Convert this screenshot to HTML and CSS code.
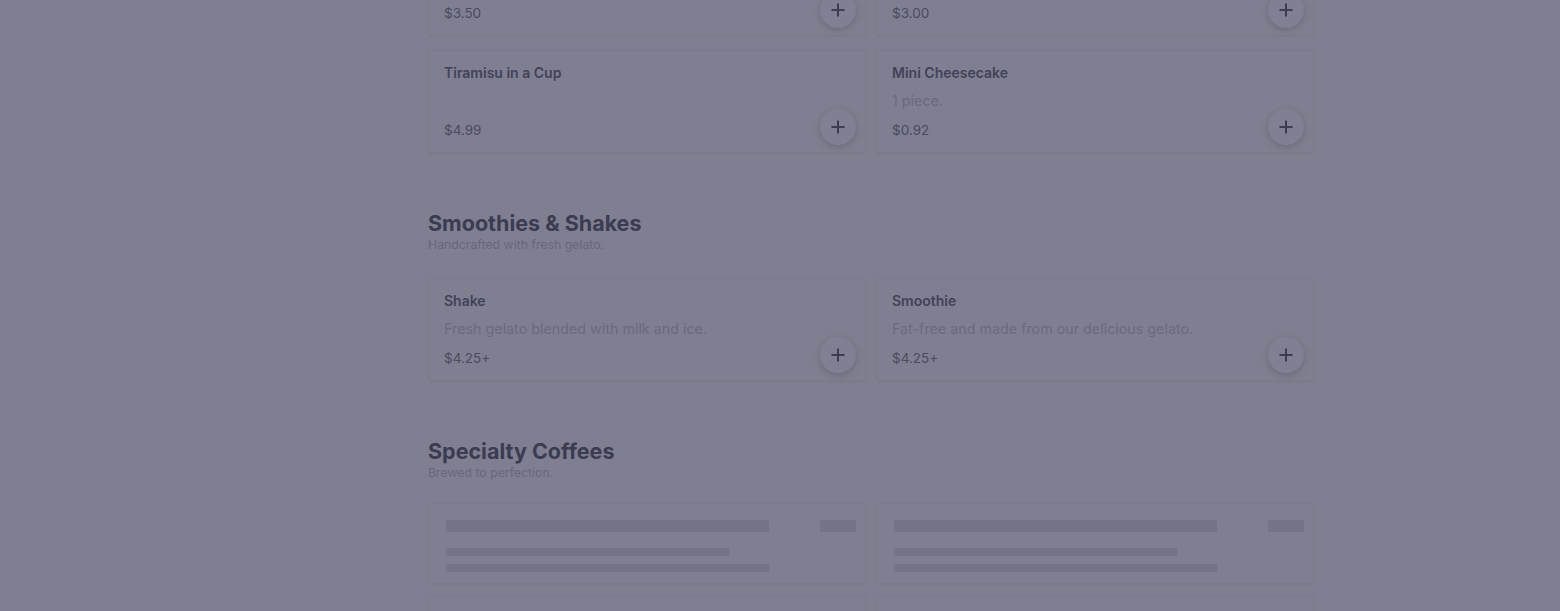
FILE: index.html
```html
<!DOCTYPE html>
<html lang="en">
<head>
<meta charset="utf-8">
<title>Menu</title>
<link rel="stylesheet" href="styles.css">
</head>
<body>
<div class="page">
  <main class="menu">
    <section class="section section--first">
      <div class="grid">
        <article class="card">
          <h3 class="card__title"></h3>
          <p class="card__desc"></p>
          <p class="card__price">$3.50</p>
          <button class="add" aria-label="Add"><svg viewBox="0 0 14 14" width="14" height="14"><path d="M7 0.5v13M0.5 7h13" /></svg></button>
        </article>
        <article class="card">
          <h3 class="card__title"></h3>
          <p class="card__desc"></p>
          <p class="card__price">$3.00</p>
          <button class="add" aria-label="Add"><svg viewBox="0 0 14 14" width="14" height="14"><path d="M7 0.5v13M0.5 7h13" /></svg></button>
        </article>
        <article class="card">
          <h3 class="card__title">Tiramisu in a Cup</h3>
          <p class="card__desc"></p>
          <p class="card__price">$4.99</p>
          <button class="add" aria-label="Add"><svg viewBox="0 0 14 14" width="14" height="14"><path d="M7 0.5v13M0.5 7h13" /></svg></button>
        </article>
        <article class="card">
          <h3 class="card__title">Mini Cheesecake</h3>
          <p class="card__desc">1 piece.</p>
          <p class="card__price">$0.92</p>
          <button class="add" aria-label="Add"><svg viewBox="0 0 14 14" width="14" height="14"><path d="M7 0.5v13M0.5 7h13" /></svg></button>
        </article>
      </div>
    </section>

    <section class="section">
      <h2 class="section__title">Smoothies &amp; Shakes</h2>
      <p class="section__sub">Handcrafted with fresh gelato.</p>
      <div class="grid">
        <article class="card">
          <h3 class="card__title">Shake</h3>
          <p class="card__desc">Fresh gelato blended with milk and ice.</p>
          <p class="card__price">$4.25+</p>
          <button class="add" aria-label="Add"><svg viewBox="0 0 14 14" width="14" height="14"><path d="M7 0.5v13M0.5 7h13" /></svg></button>
        </article>
        <article class="card">
          <h3 class="card__title">Smoothie</h3>
          <p class="card__desc">Fat-free and made from our delicious gelato.</p>
          <p class="card__price">$4.25+</p>
          <button class="add" aria-label="Add"><svg viewBox="0 0 14 14" width="14" height="14"><path d="M7 0.5v13M0.5 7h13" /></svg></button>
        </article>
      </div>
    </section>

    <section class="section">
      <h2 class="section__title">Specialty Coffees</h2>
      <p class="section__sub">Brewed to perfection.</p>
      <div class="grid grid--loading">
        <div class="skeleton">
          <div class="skeleton__row"><span class="bar bar--title"></span><span class="bar bar--price"></span></div>
          <span class="bar bar--line bar--short"></span>
          <span class="bar bar--line"></span>
        </div>
        <div class="skeleton">
          <div class="skeleton__row"><span class="bar bar--title"></span><span class="bar bar--price"></span></div>
          <span class="bar bar--line bar--short"></span>
          <span class="bar bar--line"></span>
        </div>
        <div class="skeleton">
          <div class="skeleton__row"><span class="bar bar--title"></span><span class="bar bar--price"></span></div>
          <span class="bar bar--line bar--short"></span>
          <span class="bar bar--line"></span>
        </div>
        <div class="skeleton">
          <div class="skeleton__row"><span class="bar bar--title"></span><span class="bar bar--price"></span></div>
          <span class="bar bar--line bar--short"></span>
          <span class="bar bar--line"></span>
        </div>
      </div>
    </section>
  </main>
</div>
</body>
</html>
```

FILE: styles.css
```css
* { box-sizing: border-box; }

html, body {
  margin: 0;
  padding: 0;
  height: 611px;
  overflow: hidden;
  background: #7f7f91;
  font-family: Inter, "Noto Sans", sans-serif;
}

.page {
  display: flex;
  padding-left: 428px;
}

.menu {
  width: 886px;
  display: flex;
  flex-direction: column;
}

.section {
  margin-top: 56px;
}

.section--first {
  margin-top: -67px;
}

.section__title {
  margin: 0;
  font-size: 21.5px;
  line-height: 28px;
  font-weight: 700;
  color: #3b3b51;
}

.section__sub {
  margin: 0;
  font-size: 12.3px;
  line-height: 16px;
  color: #67677d;
}

.section__sub + .grid {
  margin-top: 25px;
}

.section__sub + .grid--loading {
  margin-top: 22px;
}

.grid {
  display: grid;
  grid-template-columns: 1fr 1fr;
  gap: 14px 10px;
}

.grid--loading {
  gap: 12px 10px;
}

.card {
  position: relative;
  border: 1px solid #7b7b8e;
  border-radius: 4px;
  padding: 12px 16px 12px 15px;
  box-shadow: 0 1px 3px rgba(20, 20, 40, 0.05);
  background: #7f7f91;
  display: flex;
  flex-direction: column;
}

.card__title {
  margin: 0;
  min-height: 20px;
  font-size: 14px;
  line-height: 20px;
  font-weight: 600;
  color: #42425a;
}

.card__desc {
  margin: 8px 0 0;
  min-height: 20px;
  font-size: 14.3px;
  line-height: 20px;
  color: #6a6a81;
}

.card__price {
  margin: 9px 0 0;
  font-size: 13.5px;
  line-height: 20px;
  color: #4a4a61;
}

.add {
  position: absolute;
  right: 9px;
  bottom: 7px;
  width: 36px;
  height: 36px;
  border: none;
  border-radius: 50%;
  padding: 0;
  background: #808093;
  box-shadow: 0 2px 7px rgba(30, 30, 50, 0.22);
  display: flex;
  align-items: center;
  justify-content: center;
}

.add svg path {
  stroke: #3c3c52;
  stroke-width: 2;
  fill: none;
}

.skeleton {
  border: 1px solid #7b7b8e;
  border-radius: 4px;
  padding: 16px 9px 11px 17px;
  box-shadow: 0 1px 3px rgba(20, 20, 40, 0.05);
  display: flex;
  flex-direction: column;
  height: 81px;
}

.skeleton__row {
  display: flex;
  justify-content: space-between;
}

.bar {
  display: block;
  background: #75758a;
  border-radius: 1px;
}

.bar--title {
  width: 323px;
  height: 12px;
}

.bar--price {
  width: 36px;
  height: 12px;
}

.bar--line {
  width: 323px;
  height: 8px;
  margin-top: 8px;
}

.bar--short {
  width: 283px;
  margin-top: 16px;
}
```
